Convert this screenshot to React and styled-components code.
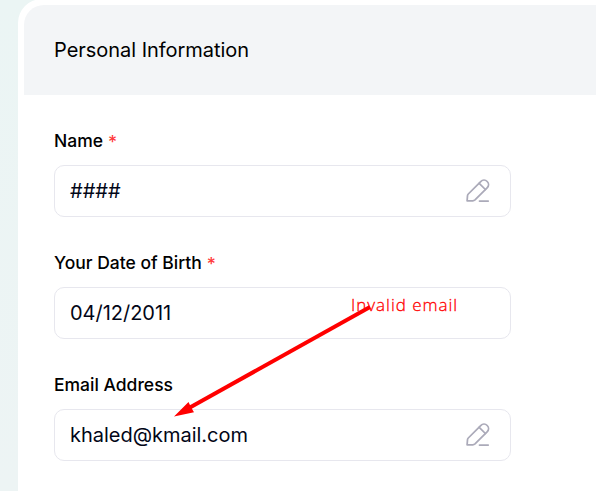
import React from "react";
import styled, { createGlobalStyle } from "styled-components";

const GlobalStyle = createGlobalStyle`
  *, *::before, *::after { box-sizing: border-box; }
  body {
    margin: 0;
    background: linear-gradient(180deg, #ebf5f4 0%, #edf4f4 100%);
    font-family: Inter, "Liberation Sans", sans-serif;
    color: #000;
    overflow: hidden;
  }
`;

const Page = styled.main`
  position: relative;
  height: 491px;
  padding-left: 18px;
  overflow: hidden;
`;

const Card = styled.section`
  height: 520px;
  margin-top: -1px;
  padding: 6px 0 0 6px;
  background: #fff;
  border-top-left-radius: 24px;
`;

const CardHeader = styled.header`
  display: flex;
  align-items: center;
  height: 90px;
  padding-left: 30px;
  background: #f3f5f7;
  border-top-left-radius: 20px;
`;

const Title = styled.h1`
  margin: 0;
  font-size: 20px;
  font-weight: 400;
  line-height: 30px;
  letter-spacing: -0.03px;
`;

const Form = styled.form`
  display: flex;
  flex-direction: column;
  gap: 32px;
  padding: 32px 0 0 30px;
`;

const Field = styled.div`
  width: 457px;
`;

const Label = styled.label`
  display: flex;
  gap: 5px;
  height: 38px;
  font-size: 17.5px;
  font-weight: 500;
  line-height: 28px;
`;

const Required = styled.span`
  padding-top: 1px;
  color: #ff3b3b;
`;

const Control = styled.div`
  display: flex;
  align-items: center;
  justify-content: space-between;
  height: 52px;
  padding: 0 19px 0 15px;
  background: #fff;
  border: 1px solid #e7e7ee;
  border-radius: 10px;
`;

const Value = styled.span`
  font-size: 20px;
  line-height: 30px;
  letter-spacing: -0.02px;
  color: #020617;
`;

const Annotation = styled.div`
  position: absolute;
  left: 351px;
  top: 293px;
  font-family: "Open Sans", "Noto Sans", sans-serif;
  font-size: 17px;
  font-weight: 300;
  line-height: 24px;
  letter-spacing: 0.98px;
  color: #f00;
  -webkit-text-stroke: 0.3px #f00;
  white-space: nowrap;
`;

const Arrow = styled.svg`
  position: absolute;
  left: 170px;
  top: 300px;
`;

const EditIcon = () => (
  <svg width="26" height="26" viewBox="0 0 26 26" fill="none" stroke="#abaab9" strokeWidth="1.75" strokeLinecap="round" strokeLinejoin="round">
    <path d="M2.1 22.8L2.5 17.7Q2.6 16.7 3.3 16L15.7 3.6C17.6 1.7 20.4 1.7 22.2 3.5C24 5.3 24 8 22.1 9.9L10 21.8Q9 22.7 7.7 22.8Z" />
    <path d="M14.2 5.3L20.4 11.5M14.5 23H23.2" />
  </svg>
);

const fields = [
  { label: "Name", value: "####", required: true, editable: true },
  { label: "Your Date of Birth", value: "04/12/2011", required: true },
  { label: "Email Address", value: "khaled@kmail.com", editable: true },
];

export default function App() {
  return (
    <>
      <GlobalStyle />
      <Page>
        <Card>
          <CardHeader>
            <Title>Personal Information</Title>
          </CardHeader>
          <Form>
            {fields.map(({ label, value, required, editable }) => (
              <Field key={label}>
                <Label>
                  {label}
                  {required && <Required>*</Required>}
                </Label>
                <Control>
                  <Value>{value}</Value>
                  {editable && <EditIcon />}
                </Control>
              </Field>
            ))}
          </Form>
        </Card>
        <Annotation>Invalid email</Annotation>
        <Arrow width="204" height="120" viewBox="170 300 204 120">
          <path d="M370 307L189 408" stroke="#f00" strokeWidth="4" />
          <path d="M174 416.5L188.5 402L191 407.2L194 412.2Z" fill="#f00" />
        </Arrow>
      </Page>
    </>
  );
}
